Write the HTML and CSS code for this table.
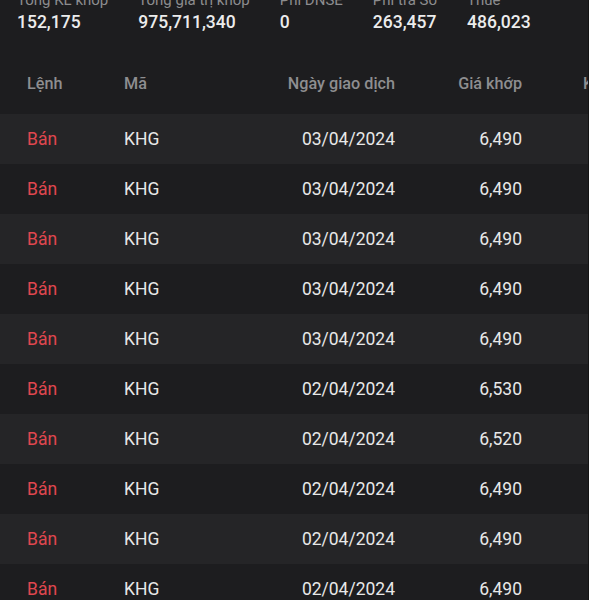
FILE: index.html
```html
<!DOCTYPE html>
<html lang="vi">
<head>
<meta charset="utf-8">
<link rel="stylesheet" href="styles.css">
</head>
<body>
<div class="panel">
  <div class="summary">
    <div class="stat"><div class="label">Tổng KL khớp</div><div class="value">152,175</div></div>
    <div class="stat"><div class="label">Tổng giá trị khớp</div><div class="value">975,711,340</div></div>
    <div class="stat"><div class="label">Phí DNSE</div><div class="value">0</div></div>
    <div class="stat"><div class="label">Phí trả Sở</div><div class="value">263,457</div></div>
    <div class="stat"><div class="label">Thuế</div><div class="value">486,023</div></div>
  </div>
  <div class="table">
    <div class="row head">
      <div class="c1">Lệnh</div><div class="c2">Mã</div><div class="c3">Ngày giao dịch</div><div class="c4">Giá khớp</div><div class="c5">KL khớp</div>
    </div>
    <div class="row"><div class="c1 sell">Bán</div><div class="c2">KHG</div><div class="c3">03/04/2024</div><div class="c4">6,490</div><div class="c5 num">1,000</div></div>
    <div class="row"><div class="c1 sell">Bán</div><div class="c2">KHG</div><div class="c3">03/04/2024</div><div class="c4">6,490</div><div class="c5 num">1,000</div></div>
    <div class="row"><div class="c1 sell">Bán</div><div class="c2">KHG</div><div class="c3">03/04/2024</div><div class="c4">6,490</div><div class="c5 num">1,000</div></div>
    <div class="row"><div class="c1 sell">Bán</div><div class="c2">KHG</div><div class="c3">03/04/2024</div><div class="c4">6,490</div><div class="c5 num">1,000</div></div>
    <div class="row"><div class="c1 sell">Bán</div><div class="c2">KHG</div><div class="c3">03/04/2024</div><div class="c4">6,490</div><div class="c5 num">1,000</div></div>
    <div class="row"><div class="c1 sell">Bán</div><div class="c2">KHG</div><div class="c3">02/04/2024</div><div class="c4">6,530</div><div class="c5 num">1,000</div></div>
    <div class="row"><div class="c1 sell">Bán</div><div class="c2">KHG</div><div class="c3">02/04/2024</div><div class="c4">6,520</div><div class="c5 num">1,000</div></div>
    <div class="row"><div class="c1 sell">Bán</div><div class="c2">KHG</div><div class="c3">02/04/2024</div><div class="c4">6,490</div><div class="c5 num">1,000</div></div>
    <div class="row"><div class="c1 sell">Bán</div><div class="c2">KHG</div><div class="c3">02/04/2024</div><div class="c4">6,490</div><div class="c5 num">1,000</div></div>
    <div class="row"><div class="c1 sell">Bán</div><div class="c2">KHG</div><div class="c3">02/04/2024</div><div class="c4">6,490</div><div class="c5 num">1,000</div></div>
  </div>
</div>
</body>
</html>
```

FILE: styles.css
```css
html, body {
  margin: 0;
  padding: 0;
  background: #ffffff;
  height: 600px;
  overflow: hidden;
}
body {
  font-family: Roboto, "Liberation Sans", sans-serif;
}
.panel {
  width: 588px;
  height: 600px;
  background: #1d1d1f;
  border-right: 1px solid #141414;
  overflow: hidden;
}
.summary {
  display: flex;
  gap: 30px;
  padding-left: 17px;
  margin-top: -10px;
}
.label {
  font-size: 15px;
  line-height: 20px;
  color: #8c8c8e;
  white-space: nowrap;
}
.value {
  font-size: 17.5px;
  line-height: 24px;
  font-weight: 500;
  color: #ececec;
  white-space: nowrap;
}
.table {
  margin-top: 24px;
  width: 700px;
}
.row {
  display: grid;
  grid-template-columns: 124px 151px 120px 127px 61px 110px;
  height: 50px;
  align-items: center;
  font-size: 17.5px;
  color: #e8e8e8;
  white-space: nowrap;
}
.row:nth-child(even) {
  background: #252527;
}
.row.head {
  font-size: 16.2px;
  font-weight: 500;
  color: #8e8e90;
  margin-bottom: 6px;
}
.c1 {
  padding-left: 27px;
}
.c3, .c4 {
  text-align: right;
}
.c5 {
  grid-column: 6;
}
.c5.num {
  text-align: right;
}
.sell {
  color: #e0474f;
}
```
